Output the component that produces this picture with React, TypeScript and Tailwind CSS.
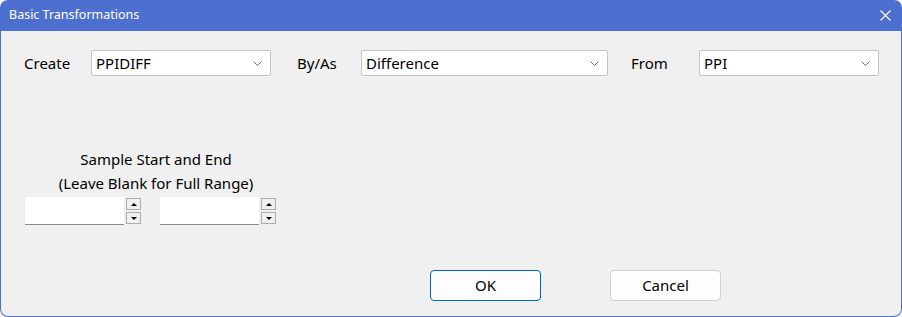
import { FC } from "react";

const font = { fontFamily: '"Noto Sans", "Open Sans", sans-serif' };

const Chevron: FC = () => (
  <svg width="9" height="5" viewBox="0 0 9 5" className="shrink-0">
    <path d="M0.5 0.5 L4.5 4.5 L8.5 0.5" fill="none" stroke="#6b6b6b" strokeWidth="1" />
  </svg>
);

const Combo: FC<{ value: string; width: string }> = ({ value, width }) => (
  <div
    className={`${width} h-[26px] bg-white border border-[#c4c4c4] rounded-[2px] flex items-center justify-between pl-[4px] pr-[8px] text-[15px] text-black`}
  >
    <span>{value}</span>
    <Chevron />
  </div>
);

const SpinBox: FC = () => (
  <div className="flex items-start gap-[2px]">
    <div className="w-[99px] h-[28px] bg-white border-b border-[#8a8a8a]" />
    <div className="flex flex-col gap-[2px] pt-[1px]">
      <div className="w-[15px] h-[12px] bg-[#f0f0f0] border border-[#adadad] flex items-center justify-center">
        <svg width="6" height="3" viewBox="0 0 6 3">
          <path d="M0 3 L3 0 L6 3 Z" fill="#000" />
        </svg>
      </div>
      <div className="w-[15px] h-[12px] bg-[#f0f0f0] border border-[#adadad] flex items-center justify-center">
        <svg width="6" height="3" viewBox="0 0 6 3">
          <path d="M0 0 L6 0 L3 3 Z" fill="#000" />
        </svg>
      </div>
    </div>
  </div>
);

const App: FC = () => {
  return (
    <div
      className="w-[902px] h-[317px] bg-[#4d6fcf] rounded-[8px] p-[1px] pt-0 overflow-hidden flex flex-col"
      style={font}
    >
      <div className="h-[31px] shrink-0 flex items-center justify-between pl-[8px] pr-[10px] text-white text-[12.5px]">
        <span>Basic Transformations</span>
        <svg width="11" height="11" viewBox="0 0 11 11">
          <path d="M0.5 0.5 L10.5 10.5 M10.5 0.5 L0.5 10.5" stroke="#fff" strokeWidth="1.1" />
        </svg>
      </div>
      <div className="flex-1 bg-[#f0f0f0] rounded-b-[7px] flex flex-col text-[15px] text-black">
        <div className="flex items-center mt-[19px] pl-[23px]">
          <span className="w-[67px]">Create</span>
          <Combo value="PPIDIFF" width="w-[180px]" />
          <span className="ml-[26px] w-[64px]">By/As</span>
          <Combo value="Difference" width="w-[247px]" />
          <span className="ml-[23px] w-[68px]">From</span>
          <Combo value="PPI" width="w-[180px]" />
        </div>

        <div className="mt-[71px] pl-[24px] flex flex-col">
          <div className="w-[262px] text-center leading-[24px]">
            <div>Sample Start and End</div>
            <div>(Leave Blank for Full Range)</div>
          </div>
          <div className="flex gap-[19px] mt-[2px]">
            <SpinBox />
            <SpinBox />
          </div>
        </div>

        <div className="flex mt-[45px] pl-[429px] gap-[69px]">
          <button className="w-[111px] h-[31px] bg-[#fdfdfd] border border-[#0067c0] rounded-[4px] text-[15px]">
            OK
          </button>
          <button className="w-[111px] h-[31px] bg-[#fdfdfd] border border-[#d0d0d0] rounded-[4px] text-[15px]">
            Cancel
          </button>
        </div>
      </div>
    </div>
  );
};

export default App;
